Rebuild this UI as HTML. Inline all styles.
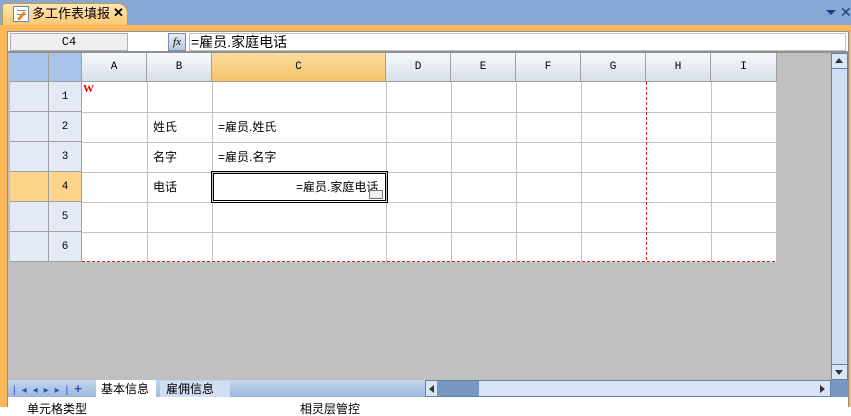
<!DOCTYPE html>
<html><head><meta charset="utf-8"><style>
*{margin:0;padding:0;box-sizing:border-box}
body{width:851px;height:407px;overflow:hidden;background:#fff;position:relative;font-family:"Liberation Sans","Noto Sans CJK SC",sans-serif;font-size:12px}
.a{position:absolute}
.ch{position:absolute;top:53px;height:29px;background:linear-gradient(#f6f8fb,#d9e0ea);border-right:1px solid #a0a0a0;border-bottom:1px solid #a0a0a0;text-align:center;line-height:29px;font-family:"Liberation Mono",monospace;font-size:11px}
.rh{position:absolute;left:49px;width:33px;height:30px;background:#e3eaf5;border-right:1px solid #a0a0a0;border-bottom:1px solid #a0a0a0;text-align:center;line-height:30px;font-family:"Liberation Mono",monospace;font-size:11px}
.rl{position:absolute;left:10px;width:39px;height:30px;background:#e3eaf5;border-right:1px solid #a0a0a0;border-bottom:1px solid #a0a0a0}
.vl{position:absolute;top:82px;height:180px;width:1px;background:#c4c4c4}
.hl{position:absolute;left:82px;width:694px;height:1px;background:#c4c4c4}
.t{position:absolute;font-size:12px;line-height:14px}
</style></head><body>
<div class="a" style="left:0;top:0;width:851px;height:26px;background:#86a8d6"></div>
<div class="a" style="left:2px;top:3px;width:126px;height:24px;background:linear-gradient(#fde7b8,#fbc469);border:1px solid #c89a45;border-bottom:none;border-radius:4px 10px 0 0"></div>
<div class="a" style="left:13px;top:6px;width:16px;height:16px;background:#fff;border:1px solid #6a88b0"><div class="a" style="left:3px;top:3px;width:9px;height:1px;background:#889"></div><div class="a" style="left:3px;top:7px;width:9px;height:1px;background:#889"></div><div class="a" style="left:6px;top:4px;width:3px;height:10px;background:#e08a20;transform:rotate(40deg)"></div></div>
<div class="t" style="left:32px;top:6px;font-size:13px;line-height:16px">多工作表填报</div>
<div class="t" style="left:113px;top:6px;font-size:13px;font-weight:bold">✕</div>
<div class="a" style="left:826px;top:10px;width:0;height:0;border-left:5px solid transparent;border-right:5px solid transparent;border-top:5px solid #1e3e80"></div>
<div class="t" style="left:840px;top:5px;color:#1e3e80;font-size:14px">✕</div>
<div class="a" style="left:0;top:25px;width:851px;height:382px;background:#fbb85a"></div>
<div class="a" style="left:7px;top:31px;width:842px;height:376px;background:#c0c0c0;border:1px solid #909090"></div>
<div class="a" style="left:8px;top:32px;width:840px;height:21px;background:#fff;border-bottom:2px solid #909090"></div>
<div class="a" style="left:10px;top:33px;width:118px;height:18px;background:#efefef;border:1px solid #b0b0b0;text-align:center;line-height:16px;font-family:'Liberation Mono',monospace;font-size:12px">C4</div>
<div class="a" style="left:168px;top:33px;width:18px;height:18px;background:linear-gradient(#e6ecf5,#b8c8de);border:1px solid #7890b0;font-family:'Liberation Serif',serif;font-style:italic;font-size:11px;text-align:center;line-height:16px">fx</div>
<div class="a" style="left:189px;top:33px;width:657px;height:18px;border:1px solid #c0c0c0"></div>
<div class="t" style="left:191px;top:34px;font-size:14px;line-height:16px">=雇员.家庭电话</div>
<div class="a" style="left:10px;top:53px;width:39px;height:29px;background:#a8c4e8;border-right:1px solid #a0a0a0;border-bottom:1px solid #a0a0a0"></div>
<div class="a" style="left:49px;top:53px;width:33px;height:29px;background:#a8c4e8;border-right:1px solid #a0a0a0;border-bottom:1px solid #a0a0a0"></div>
<div class="ch" style="left:82px;width:65px">A</div>
<div class="ch" style="left:147px;width:65px">B</div>
<div class="ch" style="left:212px;width:174px;background:linear-gradient(#fbdca0,#f4c468)">C</div>
<div class="ch" style="left:386px;width:65px">D</div>
<div class="ch" style="left:451px;width:65px">E</div>
<div class="ch" style="left:516px;width:65px">F</div>
<div class="ch" style="left:581px;width:65px">G</div>
<div class="ch" style="left:646px;width:65px">H</div>
<div class="ch" style="left:711px;width:66px">I</div>
<div class="a" style="left:82px;top:82px;width:694px;height:180px;background:#fff"></div>
<div class="rl" style="top:82px"></div><div class="rh" style="top:82px">1</div>
<div class="rl" style="top:112px"></div><div class="rh" style="top:112px">2</div>
<div class="rl" style="top:142px"></div><div class="rh" style="top:142px">3</div>
<div class="rl" style="top:172px;background:#fdd38a"></div><div class="rh" style="top:172px;background:#fdd38a">4</div>
<div class="rl" style="top:202px"></div><div class="rh" style="top:202px">5</div>
<div class="rl" style="top:232px"></div><div class="rh" style="top:232px">6</div>
<div class="vl" style="left:147px"></div><div class="vl" style="left:212px"></div><div class="vl" style="left:386px"></div><div class="vl" style="left:451px"></div><div class="vl" style="left:516px"></div><div class="vl" style="left:581px"></div><div class="vl" style="left:711px"></div><div class="vl" style="left:776px"></div>
<div class="hl" style="top:112px"></div><div class="hl" style="top:142px"></div><div class="hl" style="top:172px"></div><div class="hl" style="top:202px"></div><div class="hl" style="top:232px"></div>
<div class="a" style="left:646px;top:82px;width:1px;height:180px;background:repeating-linear-gradient(#e02020 0 3px,transparent 3px 5px)"></div>
<div class="a" style="left:82px;top:261px;width:695px;height:1px;background:repeating-linear-gradient(90deg,#e02020 0 3px,transparent 3px 5px)"></div>
<div class="t" style="left:83px;top:82px;color:#e00000;font-weight:bold;font-family:'Liberation Serif',serif;font-size:11px">W</div>
<div class="t" style="left:153px;top:120px">姓氏</div>
<div class="t" style="left:153px;top:150px">名字</div>
<div class="t" style="left:153px;top:180px">电话</div>
<div class="t" style="left:218px;top:120px">=雇员.姓氏</div>
<div class="t" style="left:218px;top:150px">=雇员.名字</div>
<div class="a" style="left:211px;top:171px;width:177px;height:32px;border:1px solid #000"><div class="a" style="left:1px;top:1px;width:173px;height:28px;border:1px solid #000;background:#fff"></div></div>
<div class="t" style="left:296px;top:180px">=雇员.家庭电话</div>
<div class="a" style="left:369px;top:190px;width:14px;height:9px;border:1px solid #777;background:#eee"></div>
<div class="a" style="left:831px;top:53px;width:17px;height:327px;background:#cfdff3;border:1px solid #6880a8"></div>
<div class="a" style="left:831px;top:53px;width:17px;height:16px;background:#dbe7f6;border:1px solid #6880a8"></div>
<div class="a" style="left:835px;top:58px;border-left:4px solid transparent;border-right:4px solid transparent;border-bottom:5px solid #333"></div>
<div class="a" style="left:831px;top:364px;width:17px;height:16px;background:#dbe7f6;border:1px solid #6880a8"></div>
<div class="a" style="left:835px;top:370px;border-left:4px solid transparent;border-right:4px solid transparent;border-top:5px solid #333"></div>
<div class="a" style="left:8px;top:380px;width:823px;height:17px;background:linear-gradient(#c4d6ee,#9cb8dc)"></div>
<div class="t" style="left:13px;top:382px;color:#3050c0;font-size:10px;letter-spacing:6px">|◂◂▸▸|<b style="font-size:13px">+</b></div>
<div class="a" style="left:96px;top:380px;width:60px;height:17px;background:#fff"></div>
<div class="t" style="left:101px;top:382px">基本信息</div>
<div class="a" style="left:160px;top:381px;width:70px;height:16px;background:#d0def2"></div>
<div class="t" style="left:166px;top:382px">雇佣信息</div>
<div class="a" style="left:425px;top:380px;width:406px;height:17px;background:#d6e4f6;border:1px solid #6880a8"></div>
<div class="a" style="left:437px;top:381px;width:42px;height:15px;background:#7898c0"></div>
<div class="a" style="left:429px;top:385px;border-top:4px solid transparent;border-bottom:4px solid transparent;border-right:5px solid #333"></div>
<div class="a" style="left:820px;top:385px;border-top:4px solid transparent;border-bottom:4px solid transparent;border-left:5px solid #333"></div>
<div class="a" style="left:831px;top:380px;width:17px;height:17px;background:#7898c0"></div>
<div class="a" style="left:8px;top:397px;width:840px;height:10px;background:#fff"></div>
<div class="t" style="left:27px;top:402px">单元格类型</div>
<div class="t" style="left:300px;top:402px">相灵层管控</div>
</body></html>
